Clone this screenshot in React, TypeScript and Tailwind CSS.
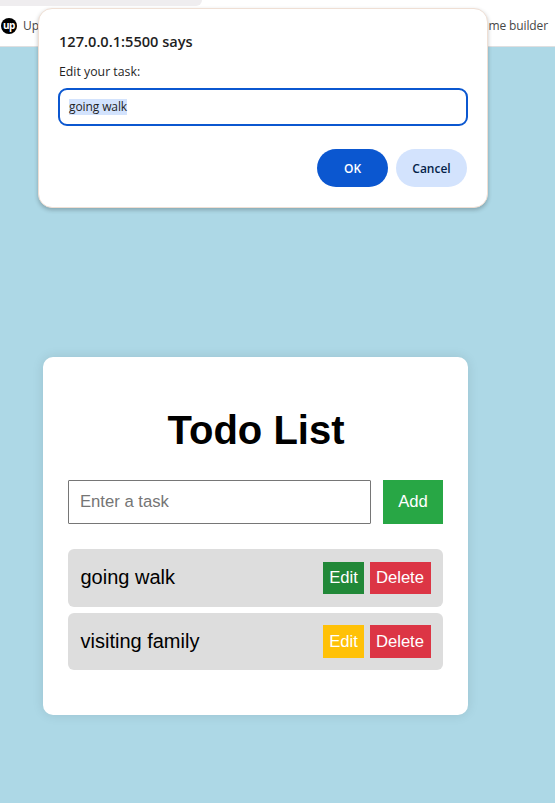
import React from "react";

type Task = { name: string; active: boolean };

const tasks: Task[] = [
  { name: "going walk", active: true },
  { name: "visiting family", active: false },
];

function BrowserBar() {
  return (
    <header className="h-[47px] shrink-0 overflow-hidden border-b border-[#dfdfe0] bg-white font-['Open_Sans',sans-serif] text-[12px] text-[#474747]">
      <div className="h-[6px] w-[202px] rounded-br-[12px] bg-[#efedef]" />
      <div className="flex h-[40px] items-center justify-between pr-[7px]">
        <div className="flex items-center gap-[6px]">
          <span className="ml-[1px] flex h-4 w-4 items-center justify-center rounded-full bg-black pb-[2px] font-['Open_Sans',sans-serif] text-[10px] leading-none font-bold tracking-[-0.5px] text-white">
            up
          </span>
          <span>Upwork</span>
        </div>
        <span className="tracking-[-0.12px]">Resume builder</span>
      </div>
    </header>
  );
}

function PromptDialog() {
  return (
    <div
      role="dialog"
      className="absolute top-[8px] left-[38px] h-[200px] w-[450px] rounded-[14px] border border-[#efdfd4] bg-white pt-[22px] pr-[20px] pl-[19px] font-['Open_Sans',sans-serif] text-[#1f1f1f] shadow-[0_2px_4px_rgba(0,0,0,0.24)]"
    >
      <h2 className="pl-px text-[14.6px] leading-5 font-semibold whitespace-nowrap">127.0.0.1:5500 says</h2>
      <p className="mt-[11px] pl-px text-[12.3px] leading-5 whitespace-nowrap">Edit your task:</p>
      <div className="mt-[6px] flex h-[38px] w-[410px] items-center rounded-[9px] border-2 border-[#0b57d0] pl-[9px] text-[12px]">
        <span className="bg-[#d3e3fd] leading-4 tracking-[-0.1px] whitespace-nowrap">going walk</span>
      </div>
      <div className="mt-[23px] flex justify-end gap-2 text-[12px] font-semibold">
        <button className="h-[38px] w-[71px] rounded-full bg-[#0b57d0] pt-px text-white">OK</button>
        <button className="h-[38px] w-[71px] rounded-full bg-[#d3e3fd] pt-px text-[#041e49]">Cancel</button>
      </div>
    </div>
  );
}

function TaskRow({ task }: { task: Task }) {
  return (
    <li
      className={`flex items-center justify-between rounded-[6px] bg-[#ddd] px-3 ${
        task.active ? "h-[58px]" : "h-[57px]"
      }`}
    >
      <span className="pb-[2px] pl-[0.5px] text-[20px] leading-6">{task.name}</span>
      <div className="flex gap-[6px] text-[16.67px] tracking-[-0.05px] text-white">
        <button
          className={`w-[41px] ${task.active ? "h-8 bg-[#218838] pb-[2px]" : "h-[33px] bg-[#ffc107]"}`}
        >
          Edit
        </button>
        <button className={`w-[61px] bg-[#dc3545] pr-px ${task.active ? "h-8 pb-[2px]" : "h-[33px]"}`}>Delete</button>
      </div>
    </li>
  );
}

export default function App() {
  return (
    <div className="relative flex h-[803px] w-[555px] flex-col overflow-hidden bg-[#add8e6] font-['Liberation_Sans',Arial,sans-serif] text-black">
      <BrowserBar />
      <main className="mt-[310px] ml-[43px] h-[358px] w-[425px] rounded-[10px] bg-white px-[25px] pt-[50px] shadow-[0_0_12px_rgba(0,0,0,0.1)]">
        <h1 className="pl-px text-center text-[40px] leading-[46px] font-bold">Todo List</h1>
        <div className="mt-[27px] flex gap-3">
          <input
            placeholder="Enter a task"
            className="h-[44px] w-[303px] rounded-[1px] border border-[#767676] px-[11px] text-[16.67px] placeholder:text-[#757575]"
          />
          <button className="h-[44px] w-[60px] bg-[#28a745] pb-[2px] text-[16.67px] text-white">Add</button>
        </div>
        <ul className="mt-[25px] flex flex-col gap-[6px]">
          {tasks.map((task) => (
            <TaskRow key={task.name} task={task} />
          ))}
        </ul>
      </main>
      <PromptDialog />
    </div>
  );
}
